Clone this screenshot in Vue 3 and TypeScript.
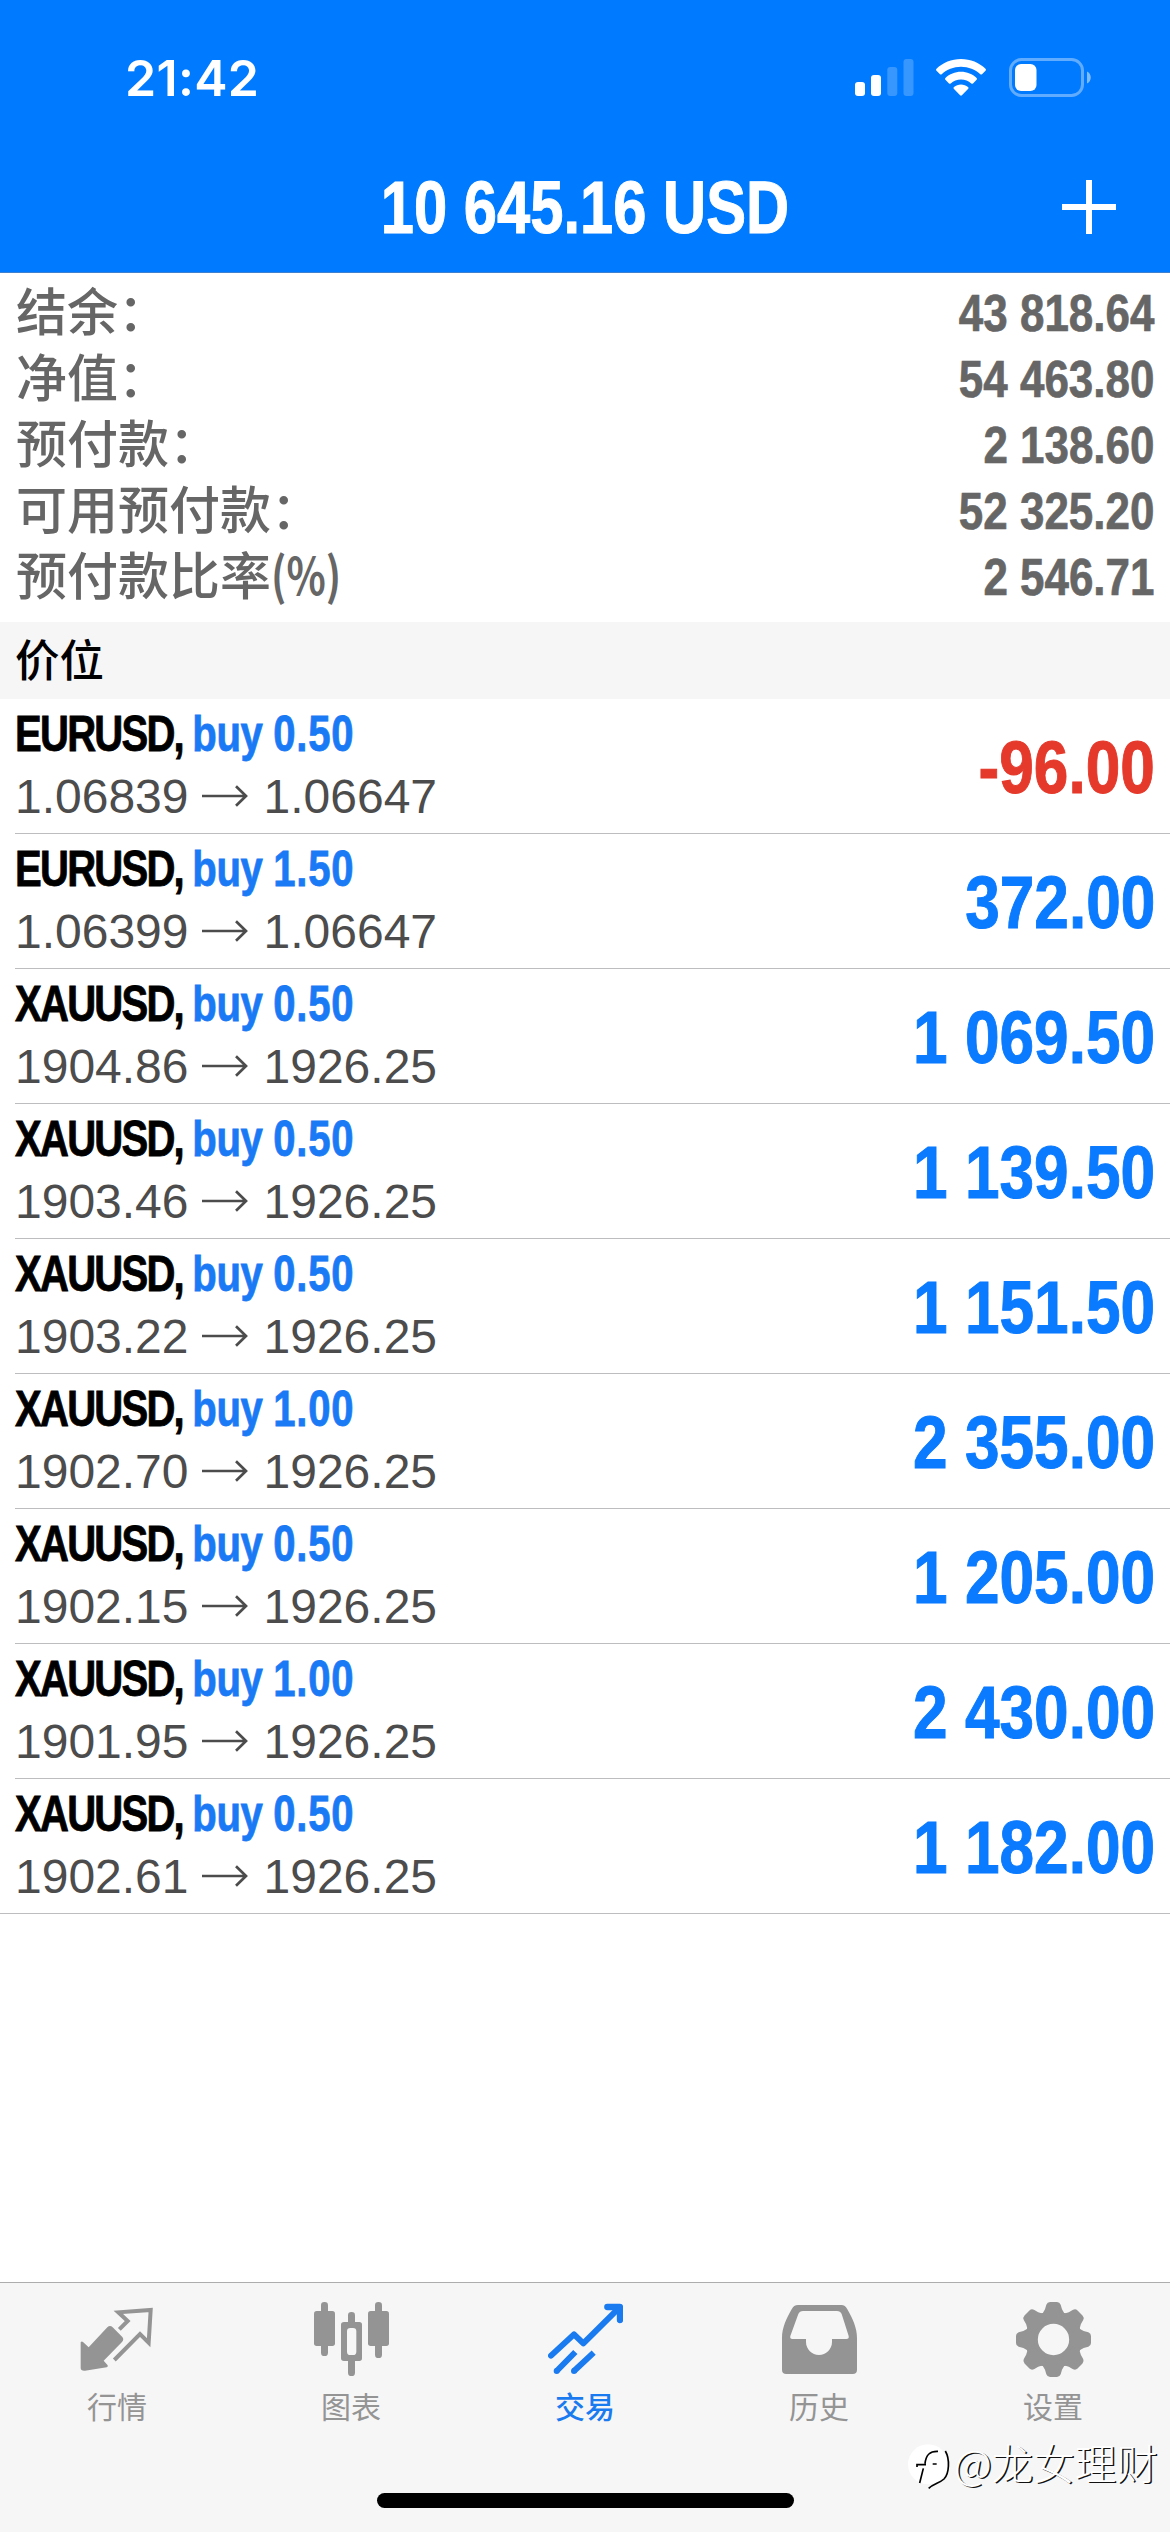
<script setup lang="ts">
interface Balance { label: string; suffix?: string; value: string }
interface Position { symbol: string; volume: string; open: string; current: string; profit: string }

const balances: Balance[] = [
  { label: '结余：', value: '43 818.64' },
  { label: '净值：', value: '54 463.80' },
  { label: '预付款：', value: '2 138.60' },
  { label: '可用预付款：', value: '52 325.20' },
  { label: '预付款比率', suffix: '(%)', value: '2 546.71' },
]

const positions: Position[] = [
  { symbol: 'EURUSD', volume: '0.50', open: '1.06839', current: '1.06647', profit: '-96.00' },
  { symbol: 'EURUSD', volume: '1.50', open: '1.06399', current: '1.06647', profit: '372.00' },
  { symbol: 'XAUUSD', volume: '0.50', open: '1904.86', current: '1926.25', profit: '1 069.50' },
  { symbol: 'XAUUSD', volume: '0.50', open: '1903.46', current: '1926.25', profit: '1 139.50' },
  { symbol: 'XAUUSD', volume: '0.50', open: '1903.22', current: '1926.25', profit: '1 151.50' },
  { symbol: 'XAUUSD', volume: '1.00', open: '1902.70', current: '1926.25', profit: '2 355.00' },
  { symbol: 'XAUUSD', volume: '0.50', open: '1902.15', current: '1926.25', profit: '1 205.00' },
  { symbol: 'XAUUSD', volume: '1.00', open: '1901.95', current: '1926.25', profit: '2 430.00' },
  { symbol: 'XAUUSD', volume: '0.50', open: '1902.61', current: '1926.25', profit: '1 182.00' },
]

const tabs = [
  { id: 'quotes', label: '行情' },
  { id: 'charts', label: '图表' },
  { id: 'trade', label: '交易' },
  { id: 'history', label: '历史' },
  { id: 'settings', label: '设置' },
]
const activeTab = 'trade'
const gearAngles = [0, 45, 90, 135, 180, 225, 270, 315]
</script>

<template>
  <div class="screen">
    <header class="header">
      <div class="status">
        <span class="clock">21:42</span>
        <div class="status-icons">
          <svg class="signal" width="59" height="37" viewBox="0 0 59 37" fill="#fff">
            <rect x="0" y="23" width="10" height="14" rx="3" />
            <rect x="16" y="16" width="10" height="21" rx="3" />
            <rect x="32.3" y="8" width="10" height="29" rx="3" opacity=".22" />
            <rect x="48.5" y="0" width="10" height="37" rx="3" opacity=".22" />
          </svg>
          <svg class="wifi" width="50" height="37" viewBox="0 0 50 37" fill="#fff">
            <path d="M25 0C34.500 0 43.200 3.700 49.500 9.700Q50.400 10.700 49.500 11.700L46 15.200Q45.200 16 44.300 15.200C39.200 10.500 32.500 7.700 25 7.700S10.800 10.500 5.700 15.200Q4.800 16 4 15.200L.5 11.700Q-.4 10.700 .5 9.700C6.800 3.700 15.500 0 25 0Z" />
            <path d="M25 12.800C31 12.800 36.500 15.100 40.600 18.900Q41.500 19.900 40.600 20.800L37 24.400Q36.200 25.200 35.300 24.400C32.500 22 29 20.600 25 20.600S17.500 22 14.700 24.400Q13.800 25.200 13 24.400L9.400 20.800Q8.500 19.900 9.400 18.900C13.500 15.100 19 12.800 25 12.800Z" />
            <path d="M25 25.500C27.700 25.500 30.100 26.400 32 28Q33 29 32 30L25.900 36.300Q25 37.200 24.100 36.300L18 30Q17 29 18 28C19.900 26.400 22.300 25.500 25 25.500Z" />
          </svg>
          <svg class="battery" width="83" height="39" viewBox="0 0 83 39">
            <rect x="1.500" y="1.500" width="72" height="36" rx="11" fill="none" stroke="#fff" stroke-opacity=".38" stroke-width="3" />
            <rect x="6" y="6" width="21.500" height="27" rx="6" fill="#fff" />
            <path d="M78 13.500C83 15.500 83 23.500 78 25.500Z" fill="#fff" opacity=".5" />
          </svg>
        </div>
      </div>
      <div class="navbar">
        <h1 class="title"><span>10 645.16 USD</span></h1>
        <svg class="plus" width="54" height="54" viewBox="0 0 54 54" stroke="#fff" stroke-width="6">
          <path d="M27 0V54M0 27H54" />
        </svg>
      </div>
    </header>

    <section class="summary">
      <div v-for="b in balances" :key="b.label" class="balance">
        <span class="balance-label">{{ b.label }}<span v-if="b.suffix" class="suffix">{{ b.suffix }}</span></span>
        <span class="balance-value">{{ b.value }}</span>
      </div>
    </section>

    <h2 class="section-title">价位</h2>

    <ul class="positions">
      <li v-for="(p, i) in positions" :key="i" class="position">
        <div class="details">
          <div class="order"><span class="symbol">{{ p.symbol }}, </span><span class="side">buy </span><span class="volume">{{ p.volume }}</span></div>
          <div class="prices">
            <span>{{ p.open }}</span>
            <svg class="arrow" width="46" height="22" viewBox="0 0 46 22" fill="none" stroke="#4c4c4c" stroke-width="2.700">
              <path d="M0 11H44M34 1.300L44 11L34 20.700" />
            </svg>
            <span>{{ p.current }}</span>
          </div>
        </div>
        <span class="profit" :class="{ loss: p.profit.startsWith('-') }">{{ p.profit }}</span>
      </li>
    </ul>

    <footer class="footer">
      <nav class="tabs">
        <div v-for="t in tabs" :key="t.id" class="tab" :class="{ active: t.id === activeTab }">
          <svg class="tab-icon" width="75" height="75" viewBox="0 0 225 225" fill="currentColor">
            <g v-if="t.id === 'quotes'">
              <path d="M2 121Q5 117 9 120L26 136L82 76Q90 68 98 76L127 105Q133 113 126 120L71 176L83 190Q85 195 80 196L15 206Q2 207 2 198Z" />
              <path d="M118 82L143 57L115 31L212 24L206 122L180 96L103 174" fill="none" stroke="currentColor" stroke-width="12" />
            </g>
            <g v-else-if="t.id === 'charts'">
              <rect x="0" y="27" width="63" height="105" rx="8" />
              <rect x="21" y="0" width="21" height="162" rx="10" />
              <rect x="162" y="27" width="63" height="105" rx="8" />
              <rect x="183" y="0" width="21" height="168" rx="10" />
              <rect x="102" y="30" width="21" height="46" rx="10" />
              <rect x="102" y="162" width="21" height="60" rx="10" />
              <path fill-rule="evenodd" d="M90 60H136Q144 60 144 68V169Q144 177 136 177H90Q81 177 81 169V68Q81 60 90 60ZM109 78Q99 78 99 88V149Q99 159 109 159H117Q127 159 127 149V88Q127 78 117 78Z" />
            </g>
            <g v-else-if="t.id === 'trade'" fill="none" stroke="currentColor" stroke-width="18">
              <path d="M9 161L78 97L106 124L214 17" stroke-linecap="round" stroke-linejoin="round" />
              <path d="M178 15H216V54" stroke-linecap="round" stroke-linejoin="round" stroke-width="19" />
              <path d="M82 150L26 207M137 152L78 207" />
              <circle cx="26" cy="207" r="9" fill="currentColor" stroke="none" />
              <circle cx="78" cy="207" r="9" fill="currentColor" stroke="none" />
            </g>
            <path v-else-if="t.id === 'history'" fill-rule="evenodd" d="M48 9H178Q190 9 196 22C212 50 225 78 225 108V203Q225 216 212 216H13Q0 216 0 203V108C0 78 13 50 29 22Q35 9 48 9ZM63 27Q53 27 49 36L25 102Q23 111 31 111H72V120C72 142 90 159 111 159S150 142 150 120V111H193Q202 111 200 102L179 36Q175 27 165 27Z" />
            <g v-else>
              <circle cx="112.500" cy="112.500" r="66" fill="none" stroke="currentColor" stroke-width="38" />
              <path v-for="a in gearAngles" :key="a" :transform="`rotate(${a} 112.5 112.5)`" d="M72 40Q82 35 87 22L91 8Q94 0 102 0H123Q131 0 134 8L138 22Q143 35 153 40L135 55H90Z" />
            </g>
          </svg>
          <span class="tab-label">{{ t.label }}</span>
        </div>
      </nav>
      <div class="home-indicator"></div>
    </footer>

    <div class="watermark">
      <svg width="42" height="48" viewBox="0 0 126 144" fill="none">
        <circle cx="60" cy="64" r="60" fill="#fff" />
        <path d="M112 24C126 48 124 92 108 108C95 120 76 122 62 136" stroke="#000" stroke-width="5" />
        <path d="M90 25C66 24 54 34 51 62M27 72V65H54M46 76L35 120M74 63H86" stroke="#000" stroke-width="5" />
      </svg>
      <span>@龙女理财</span>
    </div>
  </div>
</template>

<style>
body {
  margin: 0;
  background: #fff;
}
</style>

<style scoped>
.screen {
  position: relative;
  display: flex;
  flex-direction: column;
  width: 1170px;
  height: 2532px;
  overflow: hidden;
  background: #fff;
  font-family: "Liberation Sans", "Noto Sans CJK SC", sans-serif;
}
.header {
  box-sizing: border-box;
  height: 273px;
  background: #007aff;
  border-bottom: 1px solid #3f80cf;
  color: #fff;
}
.status {
  display: flex;
  align-items: center;
  justify-content: space-between;
  height: 141px;
  padding: 14px 78px 0 125px;
  box-sizing: border-box;
}
.clock {
  font: 600 50px/60px Inter, sans-serif;
  letter-spacing: .3px;
}
.status-icons {
  display: flex;
  align-items: center;
}
.wifi { margin-left: 22px; }
.battery { margin-left: 23px; }
.navbar {
  display: grid;
  grid-template-columns: 108px 1fr 108px;
  align-items: center;
  height: 131px;
}
.title {
  grid-column: 2;
  margin: 0;
  padding-top: 3px;
  text-align: center;
  font-size: 74px;
  line-height: 84px;
  font-weight: 700;
  white-space: nowrap;
}
.title span {
  display: inline-block;
  transform: scaleX(.807);
  -webkit-text-stroke: 1px currentColor;
}
.summary {
  height: 349px;
  padding: 7px 16px 0;
  box-sizing: border-box;
}
.balance {
  display: flex;
  align-items: center;
  justify-content: space-between;
  height: 66px;
  color: #666;
}
.balance-label {
  padding-bottom: 7px;
  font: 500 51px/59px "Noto Sans CJK SC", sans-serif;
}
.suffix {
  display: inline-block;
  transform: scaleX(.8);
  transform-origin: left;
  font-weight: 700;
}
.balance-value {
  font-size: 52px;
  font-weight: 700;
  transform: scaleX(.845);
  transform-origin: right;
  -webkit-text-stroke: .7px currentColor;
}
.section-title {
  box-sizing: border-box;
  height: 77px;
  margin: 0;
  padding-left: 15px;
  background: #f6f6f6;
  color: #000;
  font: 500 44.500px/72px "Noto Sans CJK SC", sans-serif;
}
.positions {
  margin: 0;
  padding: 0;
  list-style: none;
}
.position {
  display: flex;
  align-items: center;
  justify-content: space-between;
  box-sizing: border-box;
  height: 135px;
  margin-left: 15px;
  padding-right: 15px;
  border-bottom: 1px solid #bdbdbf;
}
.position:last-child {
  margin-left: 0;
  padding-left: 15px;
}
.details {
  display: flex;
  flex-direction: column;
  padding-bottom: 3px;
}
.order {
  height: 63px;
  line-height: 63px;
  font-size: 49.500px;
  font-weight: 700;
  white-space: pre;
  transform: scaleX(.81);
  transform-origin: left;
  -webkit-text-stroke: .8px currentColor;
}
.symbol { color: #000; letter-spacing: -2.200px; }
.side { color: #1a7af5; letter-spacing: -.5px; }
.volume { color: #1a7af5; letter-spacing: 1px; }
.prices {
  display: flex;
  align-items: center;
  height: 63px;
  line-height: 63px;
  font-size: 48px;
  color: #4c4c4c;
}
.arrow { margin: 0 16px 0 13px; }
.profit {
  padding-top: 3px;
  font-size: 74px;
  font-weight: 700;
  color: #0a7aff;
  transform: scaleX(.84);
  transform-origin: right;
  -webkit-text-stroke: 1px currentColor;
}
.profit.loss { color: #e5392b; }
.footer {
  display: flex;
  flex-direction: column;
  align-items: center;
  justify-content: space-between;
  box-sizing: border-box;
  height: 250px;
  margin-top: auto;
  padding-bottom: 24px;
  background: #f6f6f6;
  border-top: 1px solid #adadad;
}
.tabs {
  display: flex;
  width: 1170px;
}
.tab {
  display: flex;
  flex: 1;
  flex-direction: column;
  align-items: center;
  padding-top: 19px;
  color: #949494;
}
.tab.active { color: #1a7af0; }
.tab-label {
  margin-top: 6px;
  font: 400 30px/44px "Noto Sans CJK SC", sans-serif;
}
.tab.active .tab-label { font-weight: 500; }
.home-indicator {
  width: 417px;
  height: 15px;
  border-radius: 8px;
  background: #000;
}
.watermark {
  position: absolute;
  left: 908px;
  top: 2432px;
  display: flex;
  align-items: center;
  color: #fff;
  font: 300 41.500px/60px "Noto Sans CJK SC", sans-serif;
  text-shadow: 1.500px 1px 0 #111;
}
.watermark svg { margin-top: 10px; }
.watermark span { margin-left: 4px; }
</style>
